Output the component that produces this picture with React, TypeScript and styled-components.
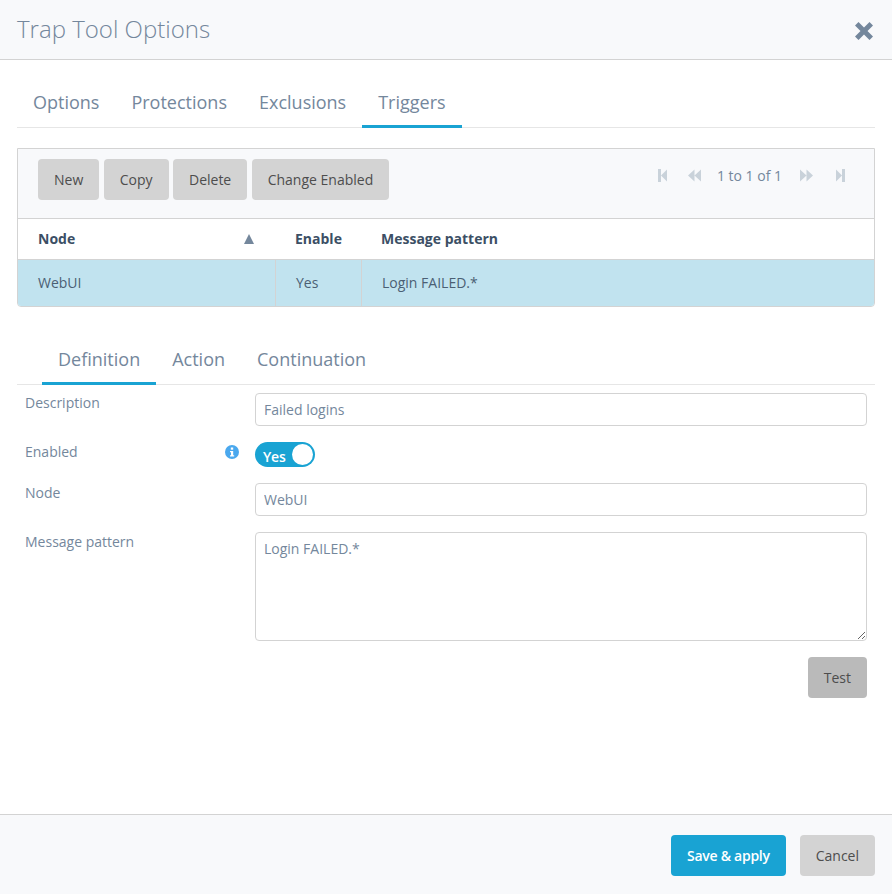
import React from 'react';
import styled, { createGlobalStyle } from 'styled-components';

const Global = createGlobalStyle`
  html, body { margin: 0; padding: 0; background: #fff; }
  * { box-sizing: border-box; }
  body { font-family: "Open Sans", "Liberation Sans", sans-serif; font-size: 14px; color: #74879c; }
`;

const Dialog = styled.div`
  width: 892px; height: 894px; display: flex; flex-direction: column; overflow: hidden;
`;
const Header = styled.header`
  height: 60px; flex: none; background: #f8f9fb; border-bottom: 1px solid #d3d3d3;
  display: flex; align-items: center; justify-content: space-between; padding: 0 17px;
`;
const Title = styled.h1`
  margin: 0 0 2px; font-size: 24px; font-weight: 300; color: #74879c; line-height: 32px;
`;
const Close = styled.button`
  border: 0; background: none; padding: 0; width: 20px; height: 20px; margin: 2px 1px 0 0; display: flex; color: #74879c;
`;
const Body = styled.main`
  flex: 1; padding: 0 17px; display: flex; flex-direction: column; min-height: 0;
`;
const TabBar = styled.nav<{ $inset?: number; $top: number }>`
  display: flex; height: ${p => p.$top}px; align-items: flex-end;
  padding-left: ${p => p.$inset ?? 0}px; border-bottom: 1px solid #e6e6e6; flex: none;
`;
const Tab = styled.a<{ $active?: boolean }>`
  position: relative; display: block; padding: 0 16px; font-size: 18px; line-height: 21px; height: 36px; margin-bottom: -1px; color: #74879c;
  border-bottom: 3px solid ${p => (p.$active ? '#19a3d3' : 'transparent')};
`;
const Grid = styled.section`
  margin-top: 20px; height: 159px; border: 1px solid #d3d3d3; border-radius: 0 0 4px 4px; flex: none; overflow: hidden;
`;
const Toolbar = styled.div`
  height: 70px; background: #f8f9fb; border-bottom: 1px solid #d3d3d3;
  display: flex; justify-content: space-between; padding: 10px 20px;
`;
const ButtonGroup = styled.div`
  display: flex; gap: 4.45px;
`;
const Button = styled.button<{ $variant?: 'primary' | 'dark' }>`
  height: 41px; padding: 0 16px; border: 0; border-radius: 4px; font: 14px "Open Sans", sans-serif; white-space: nowrap;
  background: ${p => (p.$variant === 'primary' ? '#19a3d3' : p.$variant === 'dark' ? '#bababa' : '#d3d3d3')};
  color: ${p => (p.$variant === 'primary' ? '#fff' : '#4d4d4d')};
  font-weight: ${p => (p.$variant === 'primary' ? 600 : 400)};
  letter-spacing: ${p => (p.$variant === 'primary' ? '-0.27px' : '0')};
`;
const Pager = styled.div`
  display: flex; align-items: center; height: 33px; margin-right: 9px; color: #74879c;
`;
const PagerIcon = styled.svg<{ $w: number; $gap: number }>`
  width: ${p => p.$w}px; height: 13px; fill: #c9d2da; margin-right: ${p => p.$gap}px; flex: none;
`;
const PagerText = styled.span`
  margin-right: 18px; line-height: 19px;
`;
const HeadRow = styled.div`
  display: grid; grid-template-columns: 257px 86px 1fr; height: 41px; background: #fff; border-bottom: 1px solid #d3d3d3;
`;
const HeadCell = styled.div`
  display: flex; align-items: center; justify-content: space-between; padding: 0 20px 2px;
  font-weight: 700; color: #3c4f65; font-size: 14px;
`;
const Sort = styled.svg`
  width: 10px; height: 10px; fill: #74879c; margin: 1px 1px 0 0;
`;
const DataRow = styled.div`
  display: grid; grid-template-columns: 258px 86px 1fr; height: 46px; background: #c1e3ef;
`;
const DataCell = styled.div<{ $divider?: boolean }>`
  display: flex; align-items: center; padding: 0 20px 2px; color: #4b5f74;
  border-right: ${p => (p.$divider ? '1px solid #d3d3d3' : '0')};
`;
const Form = styled.form`
  display: flex; flex-direction: column; padding: 8px 8px 0; flex: 1;
`;
const FormRow = styled.div<{ $mb: number }>`
  display: grid; grid-template-columns: 230px 1fr; margin-bottom: ${p => p.$mb}px;
`;
const LabelCell = styled.div<{ $offset?: number }>`
  display: flex; justify-content: space-between; align-items: flex-start; padding: ${p => p.$offset ?? 0}px 16px 0 0;
`;
const Label = styled.label`
  line-height: 19px; color: #74879c;
`;
const Info = styled.svg`
  width: 14px; height: 14px; margin-top: 3px;
`;
const Input = styled.input`
  display: block; width: 100%; height: 33px; border: 1px solid #d3d3d3; border-radius: 4px; padding: 0 8px;
  font: 14px "Open Sans", sans-serif; color: #74879c; background: #fff; outline: 0;
`;
const TextArea = styled.textarea`
  display: block; width: 100%; height: 109px; border: 1px solid #d3d3d3; border-radius: 4px; padding: 6px 8px;
  font: 14px/20px "Open Sans", sans-serif; color: #74879c; background: #fff; outline: 0; resize: vertical;
`;
const Switch = styled.div`
  width: 60px; height: 25px; border-radius: 13px; background: #19a3d3; display: flex; align-items: center;
  justify-content: space-between; padding: 3px 2px 0 8px; color: #fff; font-weight: 600; font-size: 14px; letter-spacing: -0.2px; margin-top: 7px;
`;
const Knob = styled.span`
  width: 21px; height: 21px; border-radius: 50%; background: #fff; display: block; margin-top: -3px;
`;
const TestRow = styled.div`
  display: flex; justify-content: flex-end; margin-top: 16px;
`;
const Footer = styled.footer`
  height: 80px; flex: none; background: #f8f9fb; border-top: 1px solid #d3d3d3;
  display: flex; justify-content: flex-end; gap: 14px; padding: 20px 17px 0;
`;

const First = () => (
  <PagerIcon $w={9} $gap={21} viewBox="0 0 9 13"><path d="M0 0h3v13H0zM3 6.500L9 .5v12z" /></PagerIcon>
);
const Prev = () => (
  <PagerIcon $w={13} $gap={16} viewBox="0 0 13 13"><path d="M0 6.500L6.500 .5v12zM6.500 6.500L13 .5v12z" /></PagerIcon>
);
const Next = () => (
  <PagerIcon $w={13} $gap={23} viewBox="0 0 13 13"><path d="M13 6.500L6.500 .5v12zM6.500 6.500L0 .5v12z" /></PagerIcon>
);
const Last = () => (
  <PagerIcon $w={9} $gap={0} viewBox="0 0 9 13"><path d="M6 0h3v13H6zM6 6.500L0 .5v12z" /></PagerIcon>
);

export default function App() {
  return (
    <Dialog>
      <Global />
      <Header>
        <Title>Trap Tool Options</Title>
        <Close aria-label="Close">
          <svg width="20" height="20" viewBox="0 0 20 20" fill="currentColor">
            <path d="M4.500 1L10 6.500 15.500 1 19 4.500 13.500 10l5.500 5.500-3.500 3.500L10 13.500 4.500 19 1 15.500 6.500 10 1 4.500z" />
          </svg>
        </Close>
      </Header>
      <Body>
        <TabBar $top={68}>
          <Tab>Options</Tab>
          <Tab>Protections</Tab>
          <Tab>Exclusions</Tab>
          <Tab $active>Triggers</Tab>
        </TabBar>
        <Grid>
          <Toolbar>
            <ButtonGroup>
              <Button>New</Button>
              <Button>Copy</Button>
              <Button>Delete</Button>
              <Button>Change Enabled</Button>
            </ButtonGroup>
            <Pager>
              <First />
              <Prev />
              <PagerText>1 to 1 of 1</PagerText>
              <Next />
              <Last />
            </Pager>
          </Toolbar>
          <HeadRow>
            <HeadCell>
              Node
              <Sort viewBox="0 0 10 10"><path d="M5 0l5 10H0z" /></Sort>
            </HeadCell>
            <HeadCell>Enable</HeadCell>
            <HeadCell>Message pattern</HeadCell>
          </HeadRow>
          <DataRow>
            <DataCell $divider>WebUI</DataCell>
            <DataCell $divider>Yes</DataCell>
            <DataCell>Login FAILED.*</DataCell>
          </DataRow>
        </Grid>
        <TabBar $top={78} $inset={25}>
          <Tab $active>Definition</Tab>
          <Tab>Action</Tab>
          <Tab>Continuation</Tab>
        </TabBar>
        <Form>
          <FormRow $mb={9}>
            <LabelCell><Label>Description</Label></LabelCell>
            <Input readOnly value="Failed logins" />
          </FormRow>
          <FormRow $mb={16}>
            <LabelCell $offset={7}>
              <Label>Enabled</Label>
              <Info viewBox="0 0 14 14">
                <circle cx="7" cy="7" r="7" fill="#4aa8ee" />
                <rect x="5.800" y="2.500" width="2.400" height="2.200" fill="#fff" />
                <path d="M5 6h3.200v4.200H9.200v1.300H5v-1.300h1V7.300H5z" fill="#fff" />
              </Info>
            </LabelCell>
            <Switch>Yes<Knob /></Switch>
          </FormRow>
          <FormRow $mb={16}>
            <LabelCell><Label>Node</Label></LabelCell>
            <Input readOnly value="WebUI" />
          </FormRow>
          <FormRow $mb={0}>
            <LabelCell><Label>Message pattern</Label></LabelCell>
            <TextArea readOnly value="Login FAILED.*" />
          </FormRow>
          <TestRow><Button $variant="dark">Test</Button></TestRow>
        </Form>
      </Body>
      <Footer>
        <Button $variant="primary">Save &amp; apply</Button>
        <Button>Cancel</Button>
      </Footer>
    </Dialog>
  );
}
